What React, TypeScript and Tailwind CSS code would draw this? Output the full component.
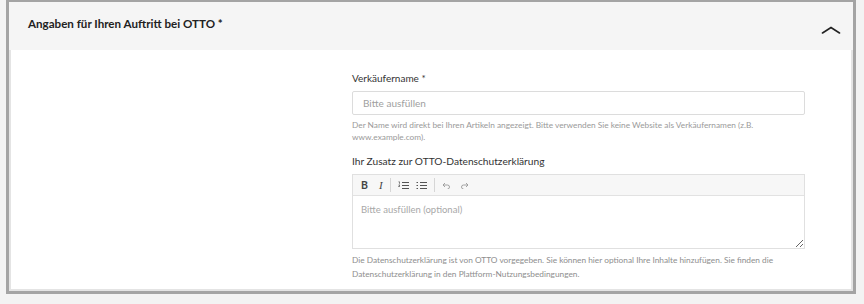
import { useState } from 'react';

function ChevronUp() {
  return (
    <svg width="20" height="8" viewBox="0 0 20 8" fill="none" stroke="#222" strokeWidth="1.6" strokeLinecap="round">
      <path d="M1.5 7 L10 1.5 L18.5 7" />
    </svg>
  );
}

function Toolbar() {
  return (
    <div className="flex h-[21px] items-center gap-[7px] border-b border-[#e2e2e2] bg-[#f7f7f7] px-[8px] text-[#444]">
      <span className="text-[10.5px] font-bold leading-none">B</span>
      <span className="ml-[4px] font-['Liberation_Serif',serif] text-[11px] italic leading-none">I</span>
      <span className="h-[14px] w-px bg-[#d6d6d6]" />
      <svg width="11" height="9" viewBox="0 0 11 9" fill="none" stroke="#555" strokeWidth="1">
        <path d="M4 1.5h7M4 4.5h7M4 7.5h7" />
        <path d="M0.5 0.8h1v2M0.5 4h1.5L0.5 5.5h1.5" strokeWidth="0.7" />
      </svg>
      <svg width="11" height="9" viewBox="0 0 11 9" fill="none" stroke="#555" strokeWidth="1">
        <path d="M4 1.5h7M4 4.5h7M4 7.5h7" />
        <path d="M0.5 1.5h1.5M0.5 4.5h1.5M0.5 7.5h1.5" />
      </svg>
      <span className="h-[14px] w-px bg-[#d6d6d6]" />
      <svg width="9" height="7" viewBox="0 0 9 7" fill="none" stroke="#999" strokeWidth="0.9">
        <path d="M3 1 L1 3 L3 5" />
        <path d="M1 3h4.5a2 2 0 0 1 0 4" />
      </svg>
      <svg width="9" height="7" viewBox="0 0 9 7" fill="none" stroke="#999" strokeWidth="0.9" className="ml-[2px]">
        <path d="M6 1 L8 3 L6 5" />
        <path d="M8 3H3.5a2 2 0 0 0 0 4" />
      </svg>
    </div>
  );
}

export default function App() {
  const [name, setName] = useState('');
  const [extra, setExtra] = useState('');

  return (
    <div className="h-[304px] w-[864px] bg-[#f3f3f3] pl-[6px] font-['Lato',sans-serif]">
      <div className="h-[294px] w-[850px] border-[3px] border-t-[2px] border-[#a4a4a4] bg-white shadow-[inset_0_0_0_2px_#e4e4e4]">
        <div className="flex h-[48px] items-start justify-between bg-[#f5f5f5] pl-[19px] pr-[12px]">
          <h2 className="pt-[13px] text-[11.6px] font-bold text-[#222]">Angaben für Ihren Auftritt bei OTTO *</h2>
          <div className="pt-[24px]">
            <ChevronUp />
          </div>
        </div>

        <div className="ml-[343px] w-[453px] pt-[22px]">
          <label className="block text-[10px] leading-[13px] text-[#333]">Verkäufername *</label>
          <input
            value={name}
            onChange={(e) => setName(e.target.value)}
            placeholder="Bitte ausfüllen"
            className="mt-[6px] block h-[24px] w-full rounded-[2px] border border-[#dcdcdc] px-[10px] text-[10px] text-[#333] outline-none placeholder:text-[#a0a0a0]"
          />
          <p className="mt-[4px] text-[8.3px] leading-[12px] text-[#9a9a9a]">
            Der Name wird direkt bei Ihren Artikeln angezeigt. Bitte verwenden Sie keine Website als Verkäufernamen (z.B.
            www.example.com).
          </p>

          <label className="mt-[11px] block text-[10.2px] leading-[14px] text-[#333]">
            Ihr Zusatz zur OTTO-Datenschutzerklärung
          </label>
          <div className="mt-[6px] border border-[#e0e0e0]">
            <Toolbar />
            <textarea
              value={extra}
              onChange={(e) => setExtra(e.target.value)}
              placeholder="Bitte ausfüllen (optional)"
              className="block h-[52px] w-full resize-y px-[8px] pt-[7px] text-[9.5px] text-[#333] outline-none placeholder:text-[#a8a8a8]"
            />
          </div>
          <p className="mt-[4px] text-[8.3px] leading-[14px] text-[#8e8e8e]">
            Die Datenschutzerklärung ist von OTTO vorgegeben. Sie können hier optional Ihre Inhalte hinzufügen. Sie finden die
            Datenschutzerklärung in den Plattform-Nutzungsbedingungen.
          </p>
        </div>
      </div>
    </div>
  );
}
